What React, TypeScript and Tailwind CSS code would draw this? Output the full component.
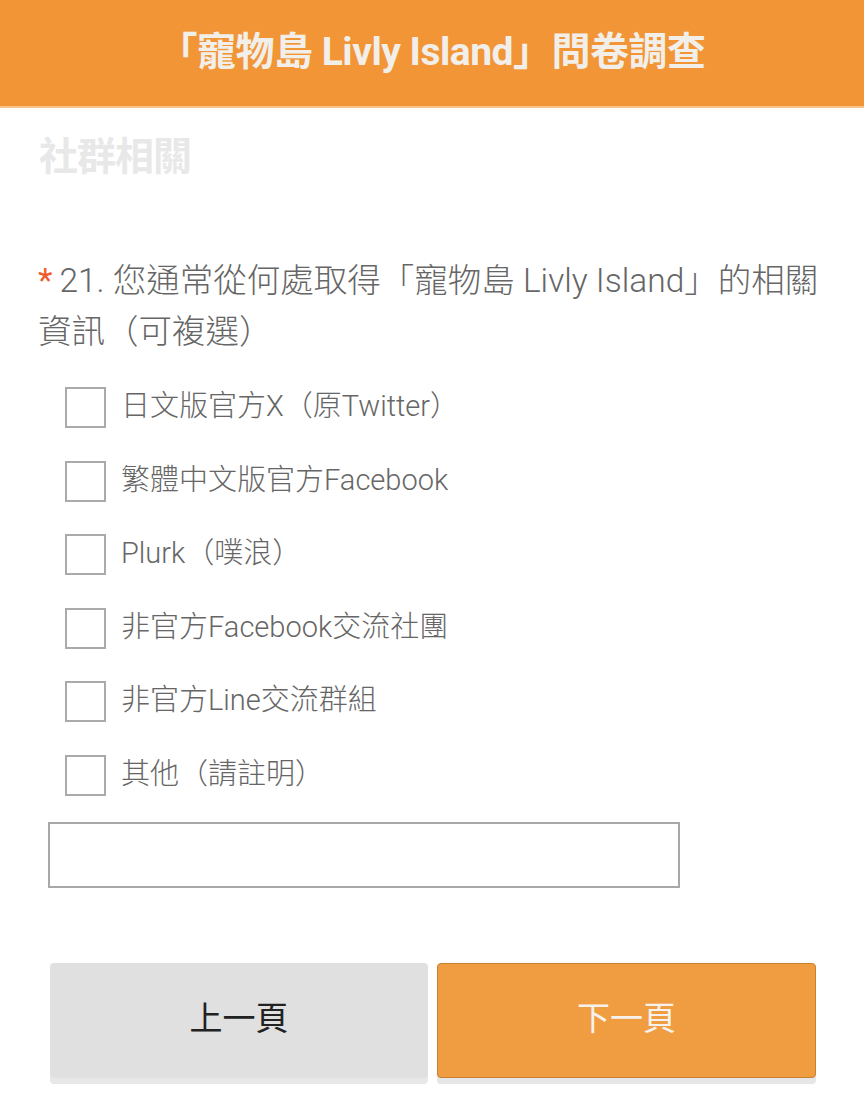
import React from "react";

const font = { fontFamily: "Roboto, 'Noto Sans CJK TC', 'Noto Sans', sans-serif" };

const options = [
  "日文版官方X（原Twitter）",
  "繁體中文版官方Facebook",
  "Plurk（噗浪）",
  "非官方Facebook交流社團",
  "非官方Line交流群組",
  "其他（請註明）",
];

export default function App() {
  return (
    <div className="w-[864px] h-[1105px] bg-white overflow-hidden" style={font}>
      <header className="h-[108px] bg-[#f19536] flex items-center justify-center border-b-2 border-[#f7c48a]">
        <h1 className="text-[39px] font-bold text-[#f2efea] tracking-[-0.5px] leading-none mt-[-2px]">
          「寵物島 Livly Island」問卷調查
        </h1>
      </header>
      <div className="pl-[39px] pt-[30px]">
        <h2 className="text-[39px] font-bold text-[#e8e8e8] leading-none tracking-[-1px]">社群相關</h2>
      </div>
      <div className="pl-[38px] pr-[20px] mt-[78px] text-[33.5px] text-[#666] font-light leading-[51px] whitespace-nowrap">
        <span className="text-[#f15a2b] mr-[7px] font-normal">*</span>21. 您通常從何處取得「寵物島 Livly Island」的相關
        <br />
        資訊（可複選）
      </div>
      <div className="mt-[30px] pl-[65px] flex flex-col gap-[32.5px]">
        {options.map((o) => (
          <label key={o} className="flex items-center gap-[15px] h-[41px]">
            <span className="w-[41px] h-[41px] border-2 border-[#aaa] bg-white shrink-0" />
            <span className="text-[29px] text-[#666] font-light leading-none mt-[-2px] whitespace-nowrap">{o}</span>
          </label>
        ))}
      </div>
      <div className="pl-[48px] mt-[26px]">
        <div className="w-[632px] h-[66px] border-2 border-[#a8a8a8] bg-white" />
      </div>
      <div className="flex gap-[9px] pl-[50px] mt-[75px]">
        <button className="w-[378px] h-[115px] rounded-[4px] bg-[#e0e0e0] shadow-[0_6px_0_#e8e8e8] flex items-center justify-center text-[33px] text-[#222] leading-none">
          <span className="mt-[-3px]">上一頁</span>
        </button>
        <button className="w-[379px] h-[115px] rounded-[4px] bg-[#f09c40] border border-[#c8812e] shadow-[0_6px_0_#e6e6e6] flex items-center justify-center text-[33px] text-[#f6f1ea] leading-none">
          <span className="mt-[-3px]">下一頁</span>
        </button>
      </div>
    </div>
  );
}
